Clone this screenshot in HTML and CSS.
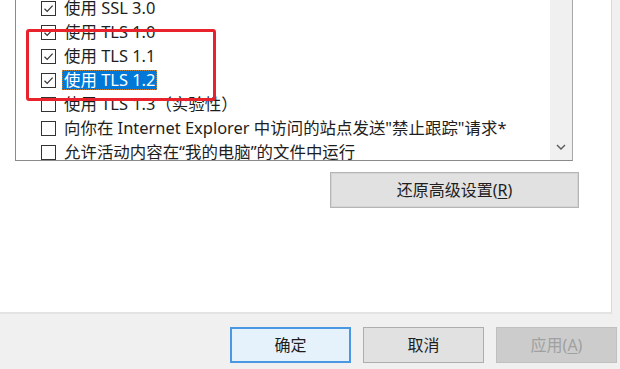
FILE: index.html
```html
<!DOCTYPE html>
<html lang="zh-CN">
<head>
<meta charset="utf-8">
<title>Internet 选项 - 高级</title>
<link rel="stylesheet" href="styles.css">
</head>
<body>
<div class="panel">
  <div class="listbox">
    <div class="items">
      <div class="row"><span class="cb checked"><svg viewBox="0 0 13 13"><path d="M2.5 6.8 L5.2 9.4 L10.6 3.6"/></svg></span><span class="label">使用 SSL 3.0</span></div>
      <div class="row"><span class="cb checked"><svg viewBox="0 0 13 13"><path d="M2.5 6.8 L5.2 9.4 L10.6 3.6"/></svg></span><span class="label">使用 TLS 1.0</span></div>
      <div class="row"><span class="cb checked"><svg viewBox="0 0 13 13"><path d="M2.5 6.8 L5.2 9.4 L10.6 3.6"/></svg></span><span class="label">使用 TLS 1.1</span></div>
      <div class="row"><span class="cb checked"><svg viewBox="0 0 13 13"><path d="M2.5 6.8 L5.2 9.4 L10.6 3.6"/></svg></span><span class="label selected">使用 TLS 1.2</span></div>
      <div class="row"><span class="cb"></span><span class="label">使用 TLS 1.3（实验性）</span></div>
      <div class="row"><span class="cb"></span><span class="label">向你在 Internet Explorer 中访问的站点发送"禁止跟踪"请求*</span></div>
      <div class="row"><span class="cb"></span><span class="label">允许活动内容在“我的电脑”的文件中运行</span></div>
    </div>
    <div class="scrollbar">
      <svg class="chev" viewBox="0 0 10 6"><path d="M1 1 L5 5 L9 1"/></svg>
    </div>
  </div>
  <div class="mark"></div>
  <button class="btn reset">还原高级设置(<u>R</u>)</button>
</div>
<div class="footer">
  <button class="btn ok">确定</button>
  <button class="btn">取消</button>
  <button class="btn disabled">应用(<u>A</u>)</button>
</div>
</body>
</html>
```
FILE: styles.css
```css
html, body {
  margin: 0;
  padding: 0;
}
body {
  width: 620px;
  height: 369px;
  overflow: hidden;
  background: #f0f0f0;
  font-family: "Noto Sans", "Noto Sans CJK SC", sans-serif;
  font-size: 16px;
  color: #1e1e1e;
}
.panel {
  position: relative;
  width: 611px;
  height: 312px;
  background: #ffffff;
  border-right: 1px solid #dadada;
  border-bottom: 2px solid #e3e3e3;
  display: flex;
  flex-direction: column;
}
.listbox {
  margin-left: 15px;
  width: 556px;
  height: 160px;
  border-left: 1px solid #8a8a8a;
  border-right: 1px solid #a8a8a8;
  border-bottom: 1px solid #8a8a8a;
  display: flex;
  overflow: hidden;
}
.items {
  flex: 1;
  margin-top: -4px;
  padding-left: 25px;
}
.row {
  height: 24px;
  display: flex;
  align-items: center;
  white-space: nowrap;
}
.cb {
  box-sizing: border-box;
  width: 15px;
  height: 15px;
  border: 1px solid #333333;
  background: #ffffff;
  display: flex;
  align-items: center;
  justify-content: center;
  flex: none;
}
.cb svg {
  width: 13px;
  height: 13px;
  fill: none;
  stroke: #333333;
  stroke-width: 1.2;
}
.label {
  margin-left: 6px;
  padding: 0 2px;
  font-size: 16.45px;
  line-height: 20px;
  box-sizing: border-box;
  height: 20px;
}
.label.selected {
  background: #0078d7;
  color: #ffffff;
  outline: 1px dotted #c08040;
  outline-offset: -1px;
}
.scrollbar {
  width: 22px;
  background: #f0f0f0;
  display: flex;
  align-items: flex-end;
  justify-content: center;
  flex: none;
}
.chev {
  width: 10px;
  height: 6px;
  margin-bottom: 10px;
  fill: none;
  stroke: #606060;
  stroke-width: 1.5;
}
.mark {
  position: absolute;
  left: 26px;
  top: 29px;
  width: 184px;
  height: 66px;
  border: 3px solid #e8232b;
  border-radius: 3px;
}
.btn {
  box-sizing: border-box;
  width: 121px;
  height: 36px;
  background: #e1e1e1;
  border: 1px solid #adadad;
  font-family: "Noto Sans", "Noto Sans CJK SC", sans-serif;
  font-size: 16px;
  color: #1e1e1e;
  padding: 0;
  line-height: 20px;
}
.btn u {
  text-decoration-thickness: 1px;
  text-underline-offset: 2px;
}
.reset {
  margin-top: 11px;
  margin-left: 330px;
  width: 249px;
  border-color: #b5b5b5;
  box-shadow: inset 0 0 0 1px #d4d4d4;
}
.footer {
  display: flex;
  gap: 12px;
  padding-top: 13px;
  padding-left: 230px;
}
.ok {
  border: 2px solid #4a98e3;
  background: #e5f1fb;
}
.disabled {
  background: #cccccc;
  border-color: #c0c0c0;
  color: #a0a0a0;
}
```
